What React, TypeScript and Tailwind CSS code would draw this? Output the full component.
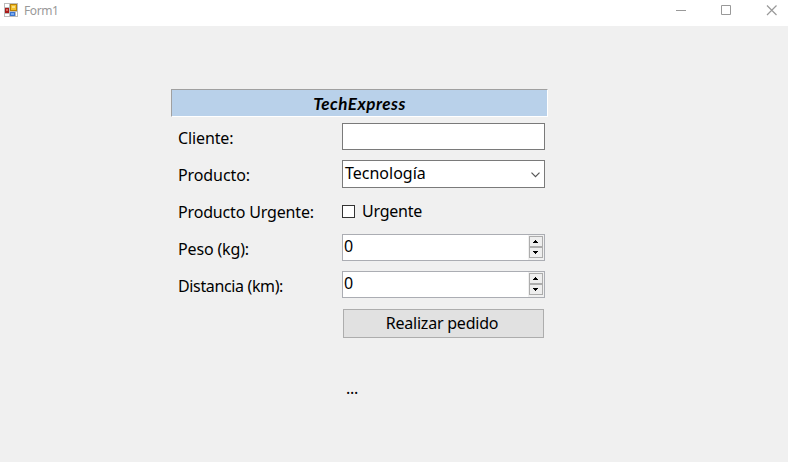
import React from 'react';

const UI = "font-['Noto_Sans','Open_Sans',sans-serif] text-[16px] leading-[22px] whitespace-pre text-black";

function FormIcon() {
  return (
    <svg width="14" height="14" viewBox="0 0 14 14" shapeRendering="crispEdges">
      <rect width="14" height="14" fill="#bcbcbc" />
      <rect x="1" y="1" width="4" height="3" fill="#fff" />
      <rect x="1" y="11" width="4" height="2" fill="#fff" />
      <rect x="12" y="9" width="1" height="4" fill="#fff" />
      <rect x="1" y="5" width="4" height="5" fill="#a81a1a" />
      <rect x="2" y="6" width="2" height="2" fill="#d8695c" />
      <rect x="6" y="1" width="7" height="7" fill="#b98206" />
      <rect x="7" y="2" width="5" height="5" fill="#f2c02c" />
      <rect x="8" y="3" width="3" height="2" fill="#fbdf7e" />
      <rect x="6" y="9" width="5" height="4" fill="#3a74cf" />
      <rect x="7" y="10" width="3" height="2" fill="#78a9ee" />
    </svg>
  );
}

function TitleBar() {
  return (
    <header className="flex h-[26px] justify-between bg-white">
      <div className="flex pl-1 pt-[3px]">
        <FormIcon />
        <span className="ml-[6px] -mt-px h-4 font-['Noto_Sans',sans-serif] text-[12px] leading-[17px] tracking-[-0.4px] text-[#999999]">Form1</span>
      </div>
      <svg width="112" height="26" viewBox="0 0 112 26" fill="none" stroke="#999999">
        <path d="M0 10.5H10" />
        <path d="M45.5 5.5h9v9h-9z" />
        <path d="M91 5.5l9.5 9.5M100.5 5.5L91 15" strokeWidth="1.2" />
      </svg>
    </header>
  );
}

function Row({ label, spacing, children }: { label: string; spacing: string; children: React.ReactNode }) {
  return (
    <div className="flex h-[37px]">
      <div className={`${UI} w-[171px] pl-[7px] pt-[9px] ${spacing}`}>{label}</div>
      {children}
    </div>
  );
}

function Numeric() {
  return (
    <div className="mt-[5px] flex h-[27px] w-[203px] justify-between border border-[#abadb3] bg-white">
      <span className={`${UI} ml-px`}>0</span>
      <div className="w-4 bg-[#f0f0f0] pl-px pt-px">
        <svg width="14" height="22" viewBox="0 0 14 22" shapeRendering="crispEdges">
          <path d="M.5.5h13v10H.5zM.5 11.5h13v10H.5z" fill="#eeeeee" stroke="#acacac" />
          <path d="M6 4h1v1h1v1h1v1H4V6h1V5h1zM4 15h5v1H8v1H7v1H6v-1H5v-1H4z" fill="#000" />
        </svg>
      </div>
    </div>
  );
}

export default function App() {
  return (
    <div className="h-[462px] w-[788px] overflow-hidden bg-[#f0f0f0]">
      <TitleBar />
      <main className="ml-[171px] w-[377px] pt-[63px]">
        <h1 className="h-[28px] border border-b-white border-l-[#a0a0a0] border-r-white border-t-[#a0a0a0] bg-[#b9d1ea] text-center font-['Lato',sans-serif] text-[17px] font-bold italic leading-[28px] tracking-[0.5px] text-black">
          TechExpress
        </h1>
        <div className="pt-px">
          <Row label="Cliente:" spacing="tracking-[-0.12px]">
            <div className="mt-[5px] h-[27px] w-[203px] border border-[#7a7a7a] bg-white" />
          </Row>
          <Row label="Producto:" spacing="tracking-[-0.1px]">
            <div className="mt-[5px] flex h-[28px] w-[203px] justify-between border border-[#7a7a7a] bg-white">
              <span className={`${UI} ml-[2px] mt-px`}>Tecnología</span>
              <svg className="mr-1 mt-[11px]" width="9" height="6" viewBox="0 0 9 6" fill="none" stroke="#555555" strokeWidth="1.2">
                <path d="M.5.7l4 4 4-4" />
              </svg>
            </div>
          </Row>
          <Row label="Producto Urgente:" spacing="tracking-[-0.16px]">
            <div className="mt-[13px] h-[13px] w-[13px] border border-[#333333] bg-white" />
            <span className={`${UI} ml-[7px] mt-[8px] tracking-[-0.25px]`}>Urgente</span>
          </Row>
          <Row label="Peso (kg):" spacing="tracking-[-0.15px]"><Numeric /></Row>
          <Row label="Distancia (km):" spacing="tracking-[-0.36px]"><Numeric /></Row>
        </div>
        <button className={`${UI} ml-[172px] mt-[6px] flex h-[29px] w-[201px] justify-center border border-[#adadad] bg-[#e1e1e1] pt-[2px] tracking-[-0.22px]`}>
          <span className="-ml-[3px]">Realizar pedido</span>
        </button>
        <p className={`${UI} ml-[175px] mt-[39px] tracking-[-0.3px]`}>...</p>
      </main>
    </div>
  );
}
